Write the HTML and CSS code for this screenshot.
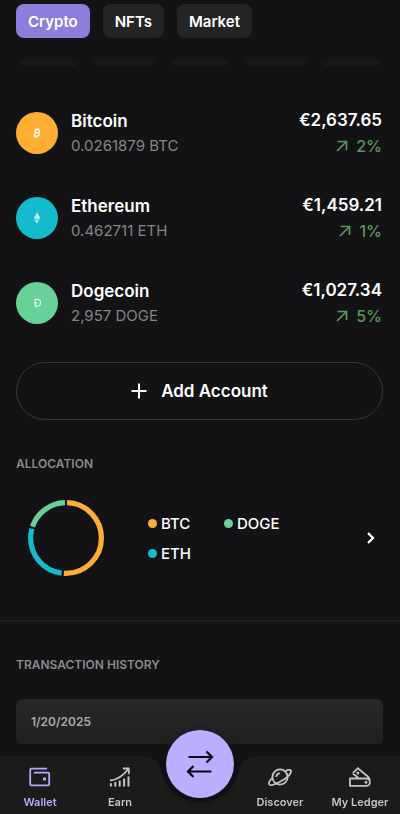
FILE: index.html
```html
<!DOCTYPE html>
<html lang="en">
<head>
<meta charset="utf-8">
<meta name="viewport" content="width=device-width, initial-scale=1">
<title>Wallet</title>
<link rel="stylesheet" href="styles.css">
</head>
<body>
<header class="tabs">
  <button class="tab tab-active" type="button">Crypto</button>
  <button class="tab" type="button">NFTs</button>
  <button class="tab" type="button">Market</button>
</header>
<main>
  <div class="shortcuts" aria-hidden="true"><span></span><span></span><span></span><span></span><span></span></div>

  <ul class="assets">
    <li class="asset">
      <span class="coin coin-btc"><svg width="8" height="10" viewBox="0 0 8 10" fill="none" stroke="#fff" stroke-width="1.3"><path d="M2.6 1.6 1.4 8.2M1.6 1.7h3.2c2.4 0 2 3-.2 3H2.2M4.4 4.7c2.7 0 2 3.4-.6 3.4H.6M3.9.4l-.2 1.2M5.3.5l-.2 1.2M2.4 8.2l-.2 1.3M3.9 8.2l-.2 1.3"/></svg></span>
      <span class="info"><span class="name">Bitcoin</span><span class="amount">0.0261879 BTC</span></span>
      <span class="value"><span class="price">€2,637.65</span><span class="change"><svg width="12" height="12" viewBox="0 0 12 12"><path d="M1.500 1.500h9V10M10.500 1.500 1 11"/></svg>2%</span></span>
    </li>
    <li class="asset">
      <span class="coin coin-eth"><svg width="8" height="12" viewBox="0 0 8 12"><path fill="#fff" fill-opacity=".65" d="M4 .5.8 6 4 7.8z"/><path fill="#fff" fill-opacity=".9" d="M4 .5 7.2 6 4 7.8z"/><path fill="#fff" fill-opacity=".9" d="M.8 6.9 4 8.7v2.8z"/><path fill="#fff" fill-opacity=".6" d="M7.2 6.9 4 8.7v2.8z"/></svg></span>
      <span class="info"><span class="name">Ethereum</span><span class="amount">0.462711 ETH</span></span>
      <span class="value"><span class="price">€1,459.21</span><span class="change"><svg width="12" height="12" viewBox="0 0 12 12"><path d="M1.500 1.500h9V10M10.500 1.500 1 11"/></svg>1%</span></span>
    </li>
    <li class="asset">
      <span class="coin coin-doge"><svg width="9" height="10" viewBox="0 0 9 10" fill="none" stroke="#fff" stroke-opacity=".9" stroke-width="1.1"><path d="M2.4 1.2v7.2M1.4 1.3h2.8c4.4 0 4.4 7 0 7H1.4M.8 4.8h3.6"/></svg></span>
      <span class="info"><span class="name">Dogecoin</span><span class="amount">2,957 DOGE</span></span>
      <span class="value"><span class="price">€1,027.34</span><span class="change"><svg width="12" height="12" viewBox="0 0 12 12"><path d="M1.500 1.500h9V10M10.500 1.500 1 11"/></svg>5%</span></span>
    </li>
  </ul>

  <button class="add" type="button"><svg width="16" height="16" viewBox="0 0 16 16" fill="none" stroke="#fff" stroke-width="2"><path d="M8 .5v15M.5 8h15"/></svg>Add Account</button>

  <section class="allocation">
    <h2>ALLOCATION</h2>
    <div class="chart-row">
      <svg class="donut" width="78" height="78" viewBox="0 0 78 78" fill="none" stroke-width="5.2">
        <g transform="rotate(-90 39 39)">
          <circle cx="39" cy="39" r="35.4" pathLength="100" stroke="#ffae35" stroke-dasharray="50.5 49.5" stroke-dashoffset="-.5"/>
          <circle cx="39" cy="39" r="35.4" pathLength="100" stroke="#13bbcd" stroke-dasharray="27.3 72.7" stroke-dashoffset="-52"/>
          <circle cx="39" cy="39" r="35.4" pathLength="100" stroke="#66d297" stroke-dasharray="19.3 80.7" stroke-dashoffset="-80.2"/>
        </g>
      </svg>
      <ul class="legend">
        <li><i class="dot dot-btc"></i>BTC</li>
        <li><i class="dot dot-doge"></i>DOGE</li>
        <li><i class="dot dot-eth"></i>ETH</li>
      </ul>
      <button class="more" type="button" aria-label="Allocation details"><svg width="10" height="14" viewBox="0 0 10 14" fill="none" stroke="#fff" stroke-width="2.2"><path d="m2 2 5 5-5 5"/></svg></button>
    </div>
  </section>

  <section class="history">
    <h2>TRANSACTION HISTORY</h2>
    <div class="day">1/20/2025</div>
  </section>
</main>

<nav class="bar">
  <a class="item item-active" href="#wallet"><svg width="22" height="20" viewBox="0 0 22 20"><path d="M18 1.700H2.500C1.600 1.700 1.200 2.200 1.200 3V17C1.200 17.900 1.700 18.300 2.500 18.300H18.800C19.700 18.300 20.200 17.900 20.200 17V7C20.200 6 19.700 5.600 18.800 5.600H5"/><circle cx="15.500" cy="12" r=".8"/></svg>Wallet</a>
  <a class="item" href="#earn"><svg width="22" height="20" viewBox="0 0 22 20"><path d="M1 13.500C9 13 14.500 8.500 19.500 1.800M14 1.500h5.800v5.800"/><path stroke-width="2" d="M1.900 16.200V19.500M6.300 15V19.500M10.700 13.500V19.500M15.100 11.500V19.500M19.500 9.500V19.500"/></svg>Earn</a>
  <span class="slot">
    <svg class="notch" width="116" height="58" viewBox="0 0 116 58"><path fill="#131313" d="M0 0C12 0 16 6 19 15C24 34 38 46 58 46S92 34 97 15C100 6 104 0 116 0Z"/></svg>
    <button class="swap" type="button" aria-label="Transfer"><svg width="28" height="28" viewBox="0 0 28 28" fill="none" stroke="#0b0a10" stroke-width="2.200"><path d="M2.500 7h23M20.500 1.500 26 7l-5.500 5.500M25.500 21.500H2M7.500 16 2 21.500 7.500 27"/></svg></button>
  </span>
  <a class="item" href="#discover"><svg width="24" height="20" viewBox="0 0 24 20"><circle cx="12" cy="10" r="7.600"/><path d="M17.500 3.800C21 2.400 23.500 2.500 23 4.800C22.300 8 17 12.300 11.500 15C6.500 17.500 1.800 19.500 1 17C.6 15.500 2.200 13 4.800 10.700M8.200 9.800C8.500 7.800 9.900 6.500 11.800 6.200"/></svg>Discover</a>
  <a class="item" href="#my-ledger"><svg width="22" height="20" viewBox="0 0 22 20"><path d="M1 11.500H17.200A3.700 3.700 0 0 1 17.200 18.900H1ZM3.700 6.300 8.800 1.200 18.800 9.500C19.900 10.500 20.600 12 20.800 13.800M3.700 6.300 9.500 11.300"/><circle cx="17" cy="15.200" r=".6"/><circle cx="8.800" cy="6" r=".6"/></svg>My Ledger</a>
</nav>
</body>
</html>
```
FILE: styles.css
```css
* { box-sizing: border-box; }

body {
  margin: 0;
  min-height: 100vh;
  overflow: hidden;
  background: #131315;
  color: #fff;
  font-family: Inter, "Liberation Sans", sans-serif;
}

button { font: inherit; color: inherit; border: 0; padding: 0; background: none; }
ul { list-style: none; margin: 0; padding: 0; }
svg { flex: none; }
h2 { margin: 0; font-size: 12px; line-height: 16px; font-weight: 600; color: #8a8a8a; }

.tabs { display: flex; gap: 13px; padding: 4px 16px 0; }
.tab {
  height: 34px;
  padding: 0 12px;
  border-radius: 8px;
  background: #242424;
  font-size: 15px;
  font-weight: 600;
}
.tab-active { background: #8d7edb; }

.shortcuts { display: flex; gap: 13px; padding: 20px 17px 0; }
.shortcuts span {
  flex: 1;
  height: 8px;
  border-radius: 0 0 8px 8px;
  background: linear-gradient(#141416, #1b1b1c);
}

.assets { padding: 24px 18px 0 16px; }
.asset { display: flex; align-items: center; height: 85px; }
.coin {
  display: flex;
  align-items: center;
  justify-content: center;
  width: 42px;
  height: 42px;
  margin-right: 13px;
  border-radius: 50%;
}
.coin-btc, .dot-btc { background: #ffae35; }
.coin-eth, .dot-eth { background: #13bbcd; }
.coin-doge, .dot-doge { background: #66d297; }
.info, .value { display: flex; flex-direction: column; padding-top: 2px; }
.info { flex: 1; }
.name, .price { font-size: 17px; line-height: 24px; font-weight: 600; }
.amount { font-size: 15px; line-height: 26px; color: #858586; }
.value { align-items: flex-end; }
.change {
  display: flex;
  align-items: center;
  gap: 8px;
  font-size: 16px;
  line-height: 28px;
  font-weight: 500;
  color: #59975a;
}
.change svg { fill: none; stroke: currentColor; stroke-width: 1.7; }

.add {
  display: flex;
  align-items: center;
  justify-content: center;
  gap: 14px;
  width: calc(100% - 33px);
  height: 58px;
  margin: 17px 17px 0 16px;
  border: 1px solid #373738;
  border-radius: 29px;
  font-size: 17px;
  font-weight: 600;
}

.allocation { padding: 36px 17px 43px 16px; border-bottom: 2px solid #1e1e20; }
.chart-row { display: flex; align-items: center; margin-top: 27px; padding-left: 11px; }
.legend {
  display: grid;
  grid-template-columns: 76px 76px;
  grid-auto-rows: 30px;
  flex: 1;
  margin-left: 43px;
}
.legend li { display: flex; align-items: center; gap: 4px; font-size: 15px; font-weight: 500; }
.dot { width: 9px; height: 9px; border-radius: 50%; }
.more { display: flex; padding: 8px 7px; }

.history { padding: 35px 17px 0 16px; }
.day {
  height: 46px;
  margin-top: 26px;
  padding: 0 15px;
  border-radius: 7px;
  background: linear-gradient(#272727, #202020);
  color: #ababab;
  font-size: 12px;
  line-height: 46px;
  font-weight: 600;
}

.bar {
  position: fixed;
  inset: auto 0 0;
  display: grid;
  grid-template-columns: repeat(5, 1fr);
  height: 70px;
  padding-top: 12px;
  background: linear-gradient(#131313cc, #131313 12px, #1b1b1b 12px);
}
.item {
  display: flex;
  flex-direction: column;
  align-items: center;
  gap: 7px;
  padding-top: 11px;
  color: #c4c4c4;
  font-size: 11px;
  line-height: 16px;
  font-weight: 600;
  text-decoration: none;
  white-space: nowrap;
}
.item svg { fill: none; stroke: currentColor; stroke-width: 1.800; }
.item-active { color: #baa9fb; }
.slot { position: relative; display: flex; justify-content: center; }
.notch { position: absolute; top: 0; left: 50%; margin-left: -58px; }
.swap {
  position: relative;
  display: flex;
  align-items: center;
  justify-content: center;
  flex: none;
  width: 68px;
  height: 68px;
  margin-top: -26px;
  border-radius: 50%;
  background: #bbadff;
  box-shadow: 0 2px 6px #0d0d0d;
}
```
